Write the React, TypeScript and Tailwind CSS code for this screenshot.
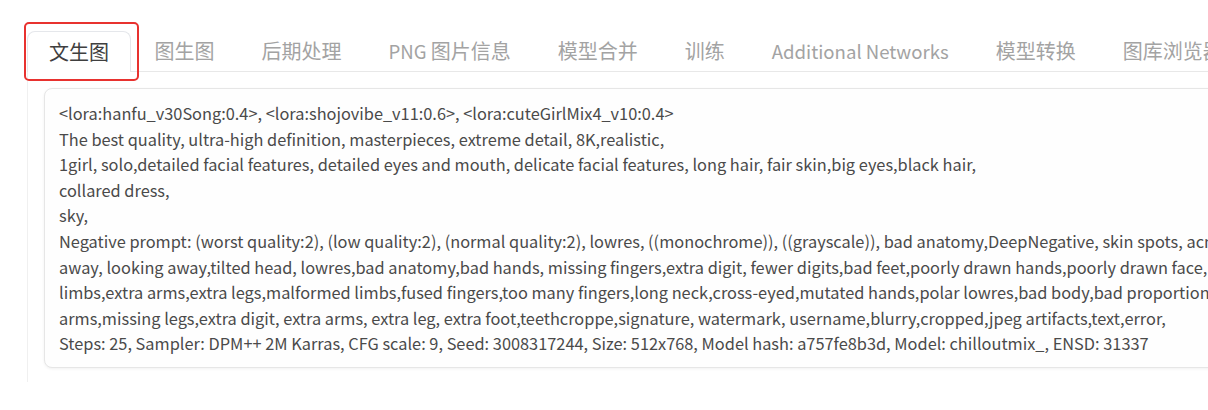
import React from 'react';

const tabs: { cjk?: string; latin?: string }[] = [
  { cjk: '图生图' },
  { cjk: '后期处理' },
  { latin: 'PNG ', cjk: '图片信息' },
  { cjk: '模型合并' },
  { cjk: '训练' },
  { latin: 'Additional Networks' },
  { cjk: '模型转换' },
  { cjk: '图库浏览器' },
  { cjk: '扩展' },
  { cjk: '设置' },
];

const promptLines = [
  '<lora:hanfu_v30Song:0.4>, <lora:shojovibe_v11:0.6>, <lora:cuteGirlMix4_v10:0.4>',
  'The best quality, ultra-high definition, masterpieces, extreme detail, 8K,realistic,',
  '1girl, solo,detailed facial features, detailed eyes and mouth, delicate facial features, long hair, fair skin,big eyes,black hair,',
  'collared dress,',
  'sky,',
  'Negative prompt: (worst quality:2), (low quality:2), (normal quality:2), lowres, ((monochrome)), ((grayscale)), bad anatomy,DeepNegative, skin spots, acnes, skin blemishes, age spot, glans, facing',
  'away, looking away,tilted head, lowres,bad anatomy,bad hands, missing fingers,extra digit, fewer digits,bad feet,poorly drawn hands,poorly drawn face, mutation, deformed, extra',
  'limbs,extra arms,extra legs,malformed limbs,fused fingers,too many fingers,long neck,cross-eyed,mutated hands,polar lowres,bad body,bad proportions,gross proportions, missing',
  'arms,missing legs,extra digit, extra arms, extra leg, extra foot,teethcroppe,signature, watermark, username,blurry,cropped,jpeg artifacts,text,error,',
  'Steps: 25, Sampler: DPM++ 2M Karras, CFG scale: 9, Seed: 3008317244, Size: 512x768, Model hash: a757fe8b3d, Model: chilloutmix_, ENSD: 31337',
];

export default function App() {
  return (
    <div
      className="w-[1208px] h-[410px] overflow-hidden bg-white pl-[27px] pt-[31px]"
      style={{ fontFamily: '"Noto Sans CJK SC", "Noto Sans", sans-serif' }}
    >
      <div className="flex items-end w-[1300px]">
        <div className="relative h-[41px] px-[21px] flex items-center border border-b-0 border-[#e5e7eb] rounded-t-[8px] text-[20px] text-[#3f3f3f] shrink-0">
          文生图
          <div className="absolute left-[-4px] top-[-10px] w-[115px] h-[59px] border-2 border-[#e8322f] rounded-[5px]" />
        </div>
        <div className="flex flex-1 border-b border-[#e8e8e8]">
          {tabs.map((tab, i) => (
            <div
              key={i}
              className="h-[40px] px-[23.5px] flex items-center text-[20px] text-[#a3a3a3] whitespace-pre shrink-0"
            >
              {tab.latin && <span className="text-[18.6px]">{tab.latin}</span>}
              {tab.cjk}
            </div>
          ))}
        </div>
      </div>

      <div className="border-l border-[#f0f0f0] pl-[16px] pt-[16px] pb-[14px] w-[1300px]">
        <div className="rounded-[8px] border border-[#e6e6e6] bg-[#fefefe] shadow-[0_1px_3px_rgba(0,0,0,0.06)] pl-[14px] pt-[12px] pb-[10px] overflow-hidden">
          {promptLines.map((line, i) => (
            <div key={i} className="text-[16.35px] leading-[25.6px] text-[#4a4a4a] whitespace-pre">
              {line}
            </div>
          ))}
        </div>
      </div>
    </div>
  );
}
